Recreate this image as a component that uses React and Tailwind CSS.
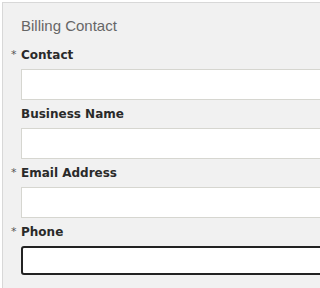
import React from 'react';

const fields = [
  { label: 'Contact', required: true },
  { label: 'Business Name', required: false },
  { label: 'Email Address', required: true },
  { label: 'Phone', required: true, focused: true },
];

const Field = ({ label, required, focused }) => (
  <div>
    <div className="flex h-[16px] mt-[6px] items-center">
      <span className="w-[10px] text-[11px] leading-[16px] text-[#555] font-['DejaVu_Sans',sans-serif]">
        {required ? '*' : ''}
      </span>
      <span className="text-[12px] leading-[16px] font-bold text-[#2a2a2a] font-['DejaVu_Sans',sans-serif]">
        {label}
      </span>
    </div>
    <div className="pl-[10px] mt-[6px]">
      {focused ? (
        <input className="block w-[400px] h-[29px] bg-white border-2 border-[#222] rounded-[3px] outline-none" />
      ) : (
        <input className="block w-[400px] h-[31px] bg-white border border-[#d6d6d0] outline-none" />
      )}
    </div>
  </div>
);

const App = () => {
  return (
    <div className="w-full h-[288px] overflow-hidden bg-white pt-[2px] pl-[2px]">
      <div className="w-full h-[286px] overflow-hidden bg-[#f1f1f1] border-t border-l border-[#d8d8d8] pl-[8px] pt-[14px]">
        <h2 className="pl-[10px] text-[15px] leading-[18px] text-[#666] font-['Liberation_Sans',Arial,sans-serif]">
          Billing Contact
        </h2>
        <div className="mt-[12px]">
          {fields.map((f) => (
            <Field key={f.label} {...f} />
          ))}
        </div>
      </div>
    </div>
  );
};

export default App;
